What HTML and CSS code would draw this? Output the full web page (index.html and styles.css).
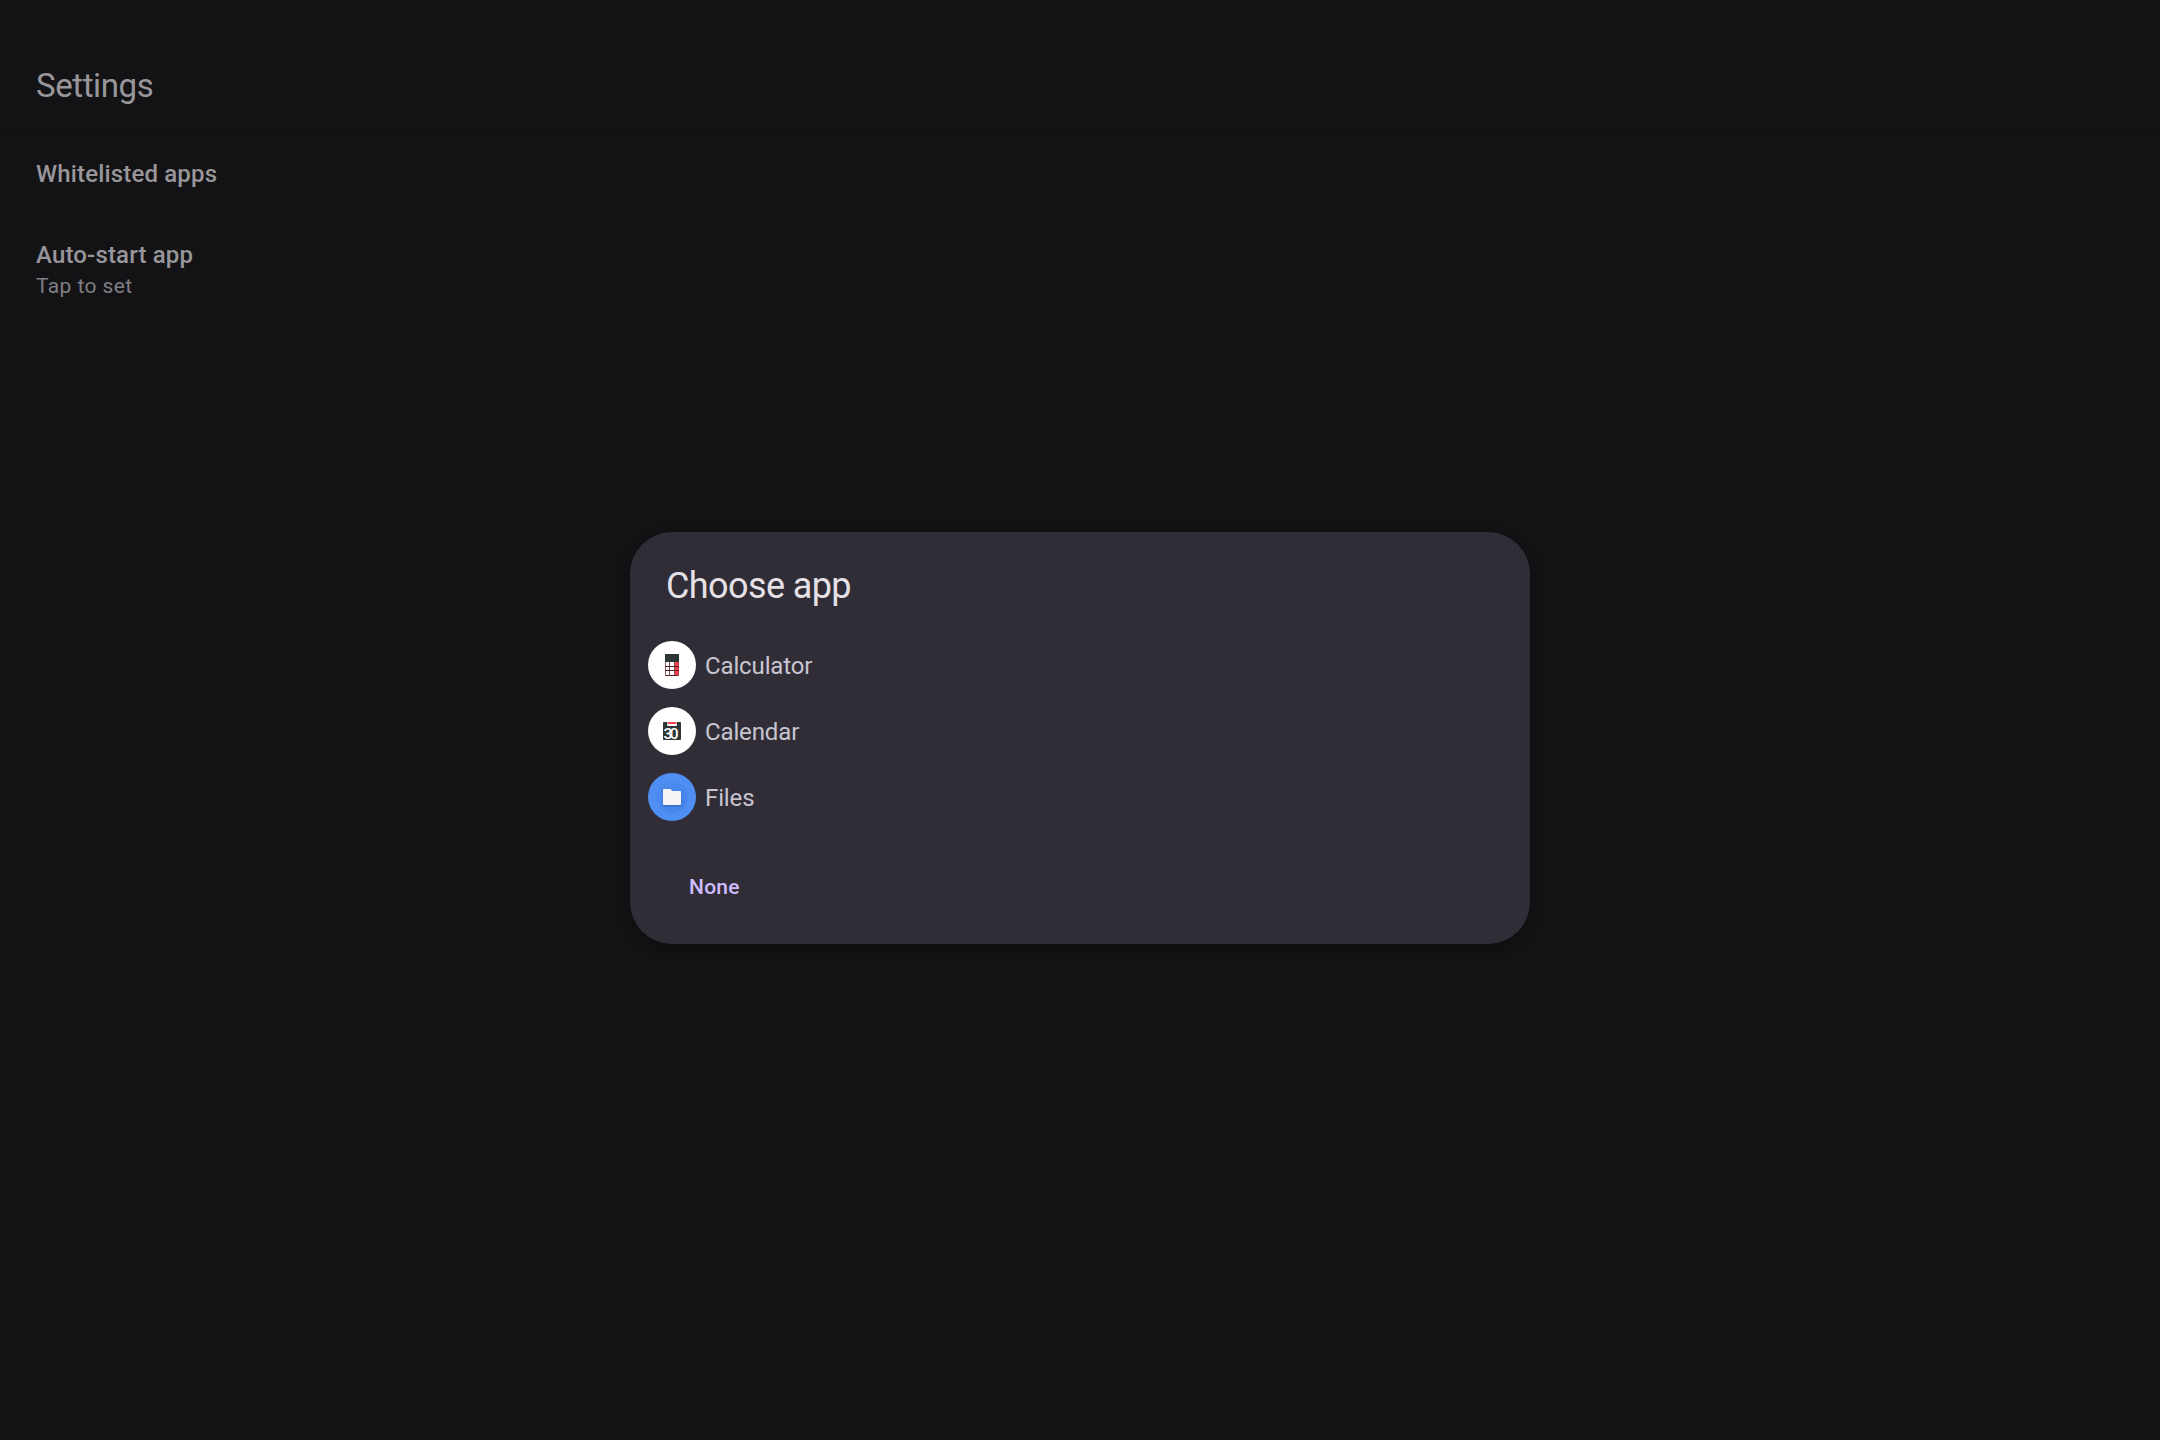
FILE: index.html
```html
<!DOCTYPE html>
<html lang="en">
<head>
<meta charset="utf-8">
<title>Settings</title>
<link rel="stylesheet" href="styles.css">
</head>
<body>
<main class="screen">
  <header class="app-bar"><h1 class="app-title">Settings</h1></header>
  <section class="preferences">
    <div class="preference"><div class="pref-title">Whitelisted apps</div></div>
    <div class="preference">
      <div class="pref-title">Auto-start app</div>
      <div class="pref-summary">Tap to set</div>
    </div>
  </section>
</main>
<div class="overlay">
  <div class="dialog" role="dialog">
    <h2 class="dialog-title">Choose app</h2>
    <ul class="app-list">
      <li class="app">
        <svg class="app-icon" viewBox="0 0 48 48">
          <circle cx="24" cy="24" r="24" fill="#fff"/>
          <rect x="17" y="13" width="14" height="22" rx="1" fill="#5c2126"/>
          <path d="M17 21V14q0-1 1-1h12q1 0 1 1v7z" fill="#2d3836"/>
          <path d="M17.700 21h3.500v4h-3.500zM22 21h4.200v4h-4.200zM17.700 26h3.500v3h-3.500zM22 26h4.200v3h-4.200zM17.700 30h3.500v4h-3.500zM22 30h4.200v4h-4.200z" fill="#fff"/>
          <path d="M27 21h3.700v4H27zM27 26h3.700v3H27zM27 30h3.700v4H27z" fill="#f8404f"/>
        </svg>
        <span class="app-name">Calculator</span>
      </li>
      <li class="app">
        <svg class="app-icon" viewBox="0 0 48 48">
          <circle cx="24" cy="24" r="24" fill="#fff"/>
          <rect x="15" y="15" width="18" height="18" rx="1" fill="#2d3836"/>
          <rect x="19.3" y="15" width="9.500" height="4" fill="#fff"/>
          <rect x="20" y="15" width="8.300" height="2" fill="#f8404f"/>
          <text class="icon-day" x="15.600" y="32" textLength="15">30</text>
        </svg>
        <span class="app-name">Calendar</span>
      </li>
      <li class="app">
        <svg class="app-icon" viewBox="0 0 48 48">
          <defs>
            <linearGradient id="disc" x1="0" y1="0" x2="1" y2="1">
              <stop offset="0" stop-color="#4d8df2"/><stop offset="1" stop-color="#4583e8"/>
            </linearGradient>
          </defs>
          <circle cx="24" cy="24" r="24" fill="#4f8ff4"/>
          <circle cx="24" cy="24" r="16" fill="url(#disc)"/>
          <path class="folder" d="M15 17q0-1 1-1h6.200q.8 0 1.200.8L24 18h8q1 0 1 1v12q0 1-1 1H16q-1 0-1-1z" fill="#f5f5f5"/>
        </svg>
        <span class="app-name">Files</span>
      </li>
    </ul>
    <button class="none-button" type="button">None</button>
  </div>
</div>
</body>
</html>
```
FILE: styles.css
```css
* { box-sizing: border-box; }

body {
  margin: 0;
  height: 100vh;
  overflow: hidden;
  background: #131315;
  color: #98969a;
  font-family: Roboto, sans-serif;
}

.app-bar {
  display: flex;
  align-items: center;
  height: 132px;
  padding: 40px 36px 0;
  box-shadow: 0 2px 3px rgba(0, 0, 0, 0.12);
}

.app-title {
  margin: 0;
  font-size: 33px;
  line-height: 42px;
  font-weight: 400;
  letter-spacing: -0.4px;
}

.preferences { padding-top: 24px; }

.preference {
  padding: 0 36px;
  margin-bottom: 45px;
}

.pref-title {
  font-size: 24px;
  line-height: 36px;
  font-weight: 500;
  letter-spacing: 0.16px;
}

.pref-summary {
  color: #807e85;
  font-size: 21px;
  line-height: 26px;
  letter-spacing: 0.4px;
}

.overlay {
  position: absolute;
  inset: 36px 0 0;
  display: flex;
  align-items: center;
  justify-content: center;
}

.dialog {
  width: 900px;
  height: 412px;
  padding: 30px 18px 0;
  border-radius: 42px;
  background: #302d37;
  box-shadow: 0 4px 14px rgba(0, 0, 0, 0.3);
}

.dialog-title {
  margin: 0 0 22px;
  padding-left: 18px;
  color: #e5e1e6;
  font-size: 36px;
  line-height: 48px;
  font-weight: 400;
  letter-spacing: -0.6px;
}

.app-list {
  display: flex;
  flex-direction: column;
  margin: 0;
  padding: 0;
  list-style: none;
}

.app {
  display: flex;
  align-items: center;
  gap: 9px;
  height: 66px;
}

.app-icon {
  width: 48px;
  height: 48px;
}

.app-name {
  padding-top: 2px;
  color: #c9c5d0;
  font-size: 24px;
  line-height: 36px;
  letter-spacing: -0.13px;
}

.icon-day {
  fill: #fff;
  font-family: Roboto, sans-serif;
  font-size: 15.5px;
  font-weight: 500;
}

.folder { filter: drop-shadow(0 1px 1px rgba(20, 50, 120, 0.4)); }

.none-button {
  margin: 27px 0 0 18px;
  padding: 15px 23px;
  border: 0;
  background: none;
  color: #cfbcff;
  font-family: inherit;
  font-size: 21px;
  line-height: 30px;
  font-weight: 500;
  letter-spacing: 0.25px;
}
```
